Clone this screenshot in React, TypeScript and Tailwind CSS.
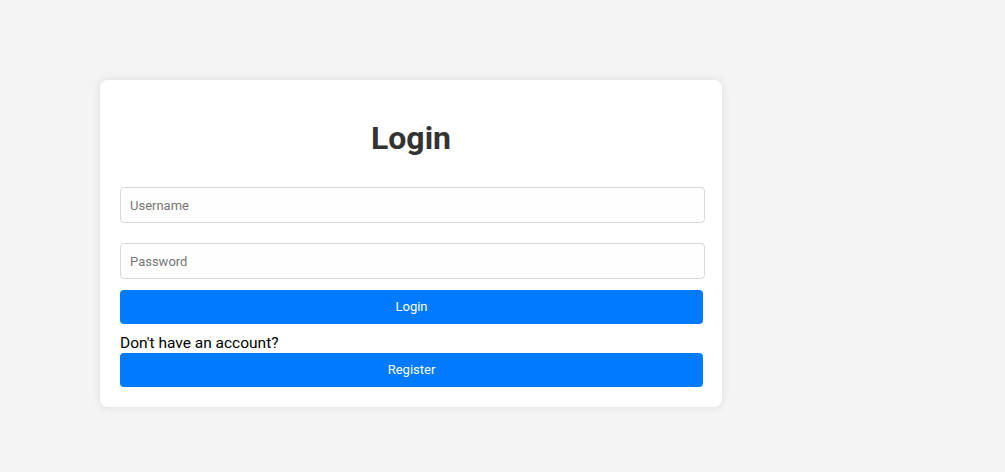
import React, { useState } from 'react';

const App: React.FC = () => {
  const [username, setUsername] = useState('');
  const [password, setPassword] = useState('');

  return (
    <div className="min-h-[472px] w-full bg-[#f4f4f4] font-['Roboto',sans-serif] pt-[80px] pl-[100px]">
      {/* Card */}
      <div className="w-[622px] bg-white rounded-[8px] shadow-[0_0_10px_rgba(0,0,0,0.1)] p-[20px] flex flex-col">
        <h2 className="text-[32px] leading-[37px] font-bold text-[#333] text-center mt-[20px] mb-[20px]">
          Login
        </h2>
        <input
          type="text"
          placeholder="Username"
          value={username}
          onChange={(e) => setUsername(e.target.value)}
          className="w-[585px] h-[36px] my-[10px] px-[9px] bg-[#fefefe] border border-[#d9d9d9] rounded-[4px] text-[13px] text-[#333] placeholder:text-[#777] outline-none"
        />
        <input
          type="password"
          placeholder="Password"
          value={password}
          onChange={(e) => setPassword(e.target.value)}
          className="w-[585px] h-[36px] mt-[10px] px-[9px] bg-[#fefefe] border border-[#d9d9d9] rounded-[4px] text-[13px] text-[#333] placeholder:text-[#777] outline-none"
        />
        <button className="w-[583px] h-[34px] mt-[11px] bg-[#007bff] text-white text-[13px] rounded-[4px]">
          Login
        </button>
        <p className="text-[15.5px] leading-[19px] text-black mt-[10px]">Don't have an account?</p>
        <button className="w-[583px] h-[34px] bg-[#007bff] text-white text-[13px] rounded-[4px]">
          Register
        </button>
      </div>
    </div>
  );
};

export default App;
